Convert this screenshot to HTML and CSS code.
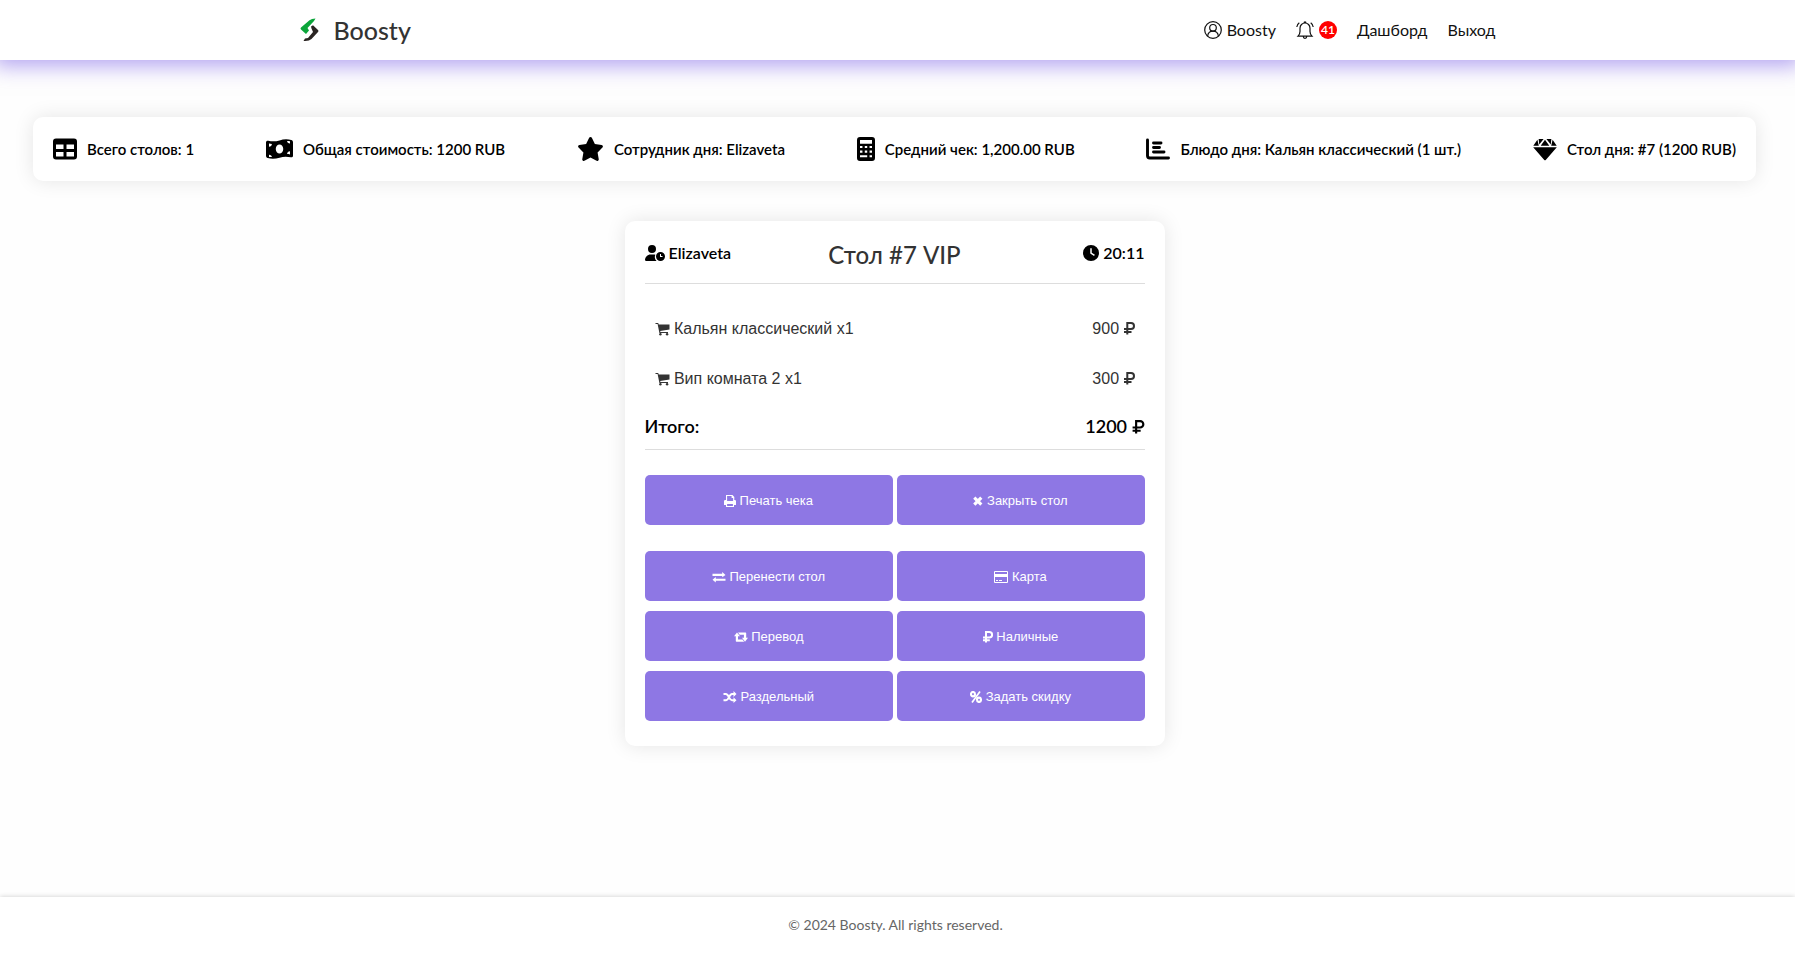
FILE: index.html
```
<!DOCTYPE html>
<html lang="ru">
<head>
<meta charset="utf-8">
<title>Boosty</title>
<link rel="stylesheet" href="styles.css">
</head>
<body>
<header class="header">
  <div class="header-inner">
    <a class="brand" href="#">
      <svg class="brand-logo" viewBox="0 0 20 26" aria-hidden="true"><path fill="#0ba53a" d="M9.500 3.200Q11.500 1.500 15.500 1.500L14 4 7.500 11 9 13.500 6 17 1 12.500Q0 11.500 1 10.500z"/><path fill="#2a2422" d="M11.500 11.500L11 9.500 13 8.300 18 13Q19 14 18 15L11.500 22Q9 24.500 3.500 24L5 21.500 8 21 13 15z"/></svg>
      <span>Boosty</span>
    </a>
    <nav class="nav">
      <a class="nav-link" href="#"><svg class="nav-icon" viewBox="0 0 18 18" fill="none" stroke="#111" stroke-width="1.200" aria-hidden="true"><circle cx="9" cy="9" r="8.300"/><circle cx="9" cy="6.800" r="3.300"/><path d="M3.600 15.200c.400-3.200 2.200-5 5.400-5s5 1.800 5.400 5"/></svg><span>Boosty</span></a>
      <a class="nav-link" href="#" aria-label="Уведомления"><svg class="nav-icon" viewBox="0 0 18 18" fill="none" stroke="#111" stroke-width="1.200" aria-hidden="true"><path d="M2 15.200h14c-1.500-1.500-2-2.700-2-4.700V7.200a5 5.200 0 0 0-10 0v3.300c0 2-.500 3.200-2 4.700zM7.300 15.500a1.700 1.800 0 0 0 3.400 0M8 2.100a1 1.200 0 0 1 2 0M3.300 1.800A6 6 0 0 0 .800 6M14.700 1.800A6 6 0 0 1 17.200 6"/></svg><span class="badge">41</span></a>
      <a class="nav-link" href="#">Дашборд</a>
      <a class="nav-link" href="#">Выход</a>
    </nav>
  </div>
</header>

<main class="main">
  <section class="stats">
    <div class="stat"><svg class="stat-icon" viewBox="0 0 512 512" aria-hidden="true"><path fill-rule="evenodd" d="M64 32h384a64 64 0 0 1 64 64v320a64 64 0 0 1-64 64H64a64 64 0 0 1-64-64V96a64 64 0 0 1 64-64zm0 128v96h160v-96zm224 0v96h160v-96zM64 320v96h160v-96zm224 0v96h160v-96z"/></svg><span>Всего столов: 1</span></div>
    <div class="stat"><svg class="stat-icon wide" viewBox="0 0 576 512" aria-hidden="true"><path fill-rule="evenodd" d="M0 112C0 86 23 73 48 79c80 20 160 17 240-7 85-25 170-30 252-6 22 6 36 25 36 47v287c0 26-23 39-48 33-80-20-160-17-240 7-85 25-170 30-252 6-22-6-36-25-36-47zM288 160c-44 0-80 43-80 96s36 96 80 96 80-43 80-96-36-96-80-96zM64 376v48c22 2 42 4 62 4 0-28-26-52-62-52zM126 148c-21-1-42-4-62-8v68c34 0 62-27 62-60zM512 304c-36 0-62 26-62 60 21 0 42 3 62 7zm0-216c-20-3-41-4-62-4 0 30 26 52 62 52z"/></svg><span>Общая стоимость: 1200 RUB</span></div>
    <div class="stat"><svg class="stat-icon wide" viewBox="0 0 576 512" aria-hidden="true"><path d="M317 18c-12-24-46-24-58 0l-64 132-144 21c-26 4-37 36-18 55l104 103-25 145c-4 26 24 46 47 34l129-69 129 69c23 12 51-8 47-34l-25-145 104-103c19-19 8-51-18-55l-144-21z"/></svg><span>Сотрудник дня: Elizaveta</span></div>
    <div class="stat"><svg class="stat-icon slim" viewBox="0 0 384 512" aria-hidden="true"><path fill-rule="evenodd" d="M64 0h256a64 64 0 0 1 64 64v384a64 64 0 0 1-64 64H64a64 64 0 0 1-64-64V64A64 64 0 0 1 64 0zm0 64v80h256V64zM64 192v44h52v-44zm102 0v44h52v-44zm102 0v44h52v-44zM64 288v48h52v-48zm102 0v48h52v-48zm102 0v48h52v-48zM64 388v44h154v-44zm204 0v44h52v-44z"/></svg><span>Средний чек: 1,200.00 RUB</span></div>
    <div class="stat"><svg class="stat-icon" viewBox="0 0 512 512" fill="none" stroke="#000" stroke-width="62" stroke-linecap="round" stroke-linejoin="round" aria-hidden="true"><path d="M32 64v336q0 48 48 48h400M160 128h160M160 224h96M160 320h224M160 224h128"/></svg><span>Блюдо дня: Кальян классический (1 шт.)</span></div>
    <div class="stat"><svg class="stat-icon" viewBox="0 0 512 512" aria-hidden="true"><path d="M120 40h106l-92 122zM286 40h106l-14 122zM256 56l92 132H164zM94 58l30 130H6zM418 58l88 130H388zM4 220h504L272 488q-16 16-32 0z"/></svg><span>Стол дня: #7 (1200 RUB)</span></div>
  </section>

  <article class="card">
    <header class="card-head">
      <span class="card-meta"><svg class="meta-icon wide" viewBox="0 0 640 512" aria-hidden="true"><path fill-rule="evenodd" d="M224 0a128 128 0 1 1 0 256 128 128 0 0 1 0-256zM178 304h92c25 0 45 4 62 10a176 176 0 0 0 38 198H30c-17 0-30-13-30-30 0-98 80-178 178-178zM496 224a144 144 0 1 1 0 288 144 144 0 0 1 0-288zm-16 64v96h80v-32h-48v-64z"/></svg> Elizaveta</span>
      <h1 class="card-title">Стол #7 VIP</h1>
      <span class="card-meta end"><svg class="meta-icon" viewBox="0 0 512 512" aria-hidden="true"><path fill-rule="evenodd" d="M256 0a256 256 0 1 1 0 512 256 256 0 0 1 0-512zm-24 100v170l120 80 28-40-100-66V100z"/></svg> 20:11</span>
    </header>
    <ul class="items">
      <li class="item"><span><svg class="item-icon" viewBox="0 0 14 14" aria-hidden="true"><path d="M0 1h2.700l.500 1.500H14v5L4.700 8.900l.200 1H12.500v1H3.900L2.100 2H0z"/><circle cx="4.900" cy="12.200" r="1.200"/><circle cx="11.600" cy="12.200" r="1.200"/></svg> Кальян классический x1</span><span>900 <svg class="ruble" viewBox="0 0 11 13" fill="none" stroke="currentColor" stroke-width="2" role="img" aria-label="руб."><path d="M3.300 12.500V1H7a2.900 2.900 0 0 1 0 6H0M0 10h7.500"/></svg></span></li>
      <li class="item"><span><svg class="item-icon" viewBox="0 0 14 14" aria-hidden="true"><path d="M0 1h2.700l.500 1.500H14v5L4.700 8.900l.200 1H12.500v1H3.900L2.100 2H0z"/><circle cx="4.900" cy="12.200" r="1.200"/><circle cx="11.600" cy="12.200" r="1.200"/></svg> Вип комната 2 x1</span><span>300 <svg class="ruble" viewBox="0 0 11 13" fill="none" stroke="currentColor" stroke-width="2" role="img" aria-label="руб."><path d="M3.300 12.500V1H7a2.900 2.900 0 0 1 0 6H0M0 10h7.500"/></svg></span></li>
    </ul>
    <div class="total"><span>Итого:</span><span>1200 <svg class="ruble big" viewBox="0 0 11 13" fill="none" stroke="currentColor" stroke-width="2" role="img" aria-label="руб."><path d="M3.300 12.500V1H7a2.900 2.900 0 0 1 0 6H0M0 10h7.500"/></svg></span></div>
    <div class="action-groups">
      <div class="actions">
        <button class="btn" type="button"><svg class="btn-icon" viewBox="0 0 12 12" aria-hidden="true"><path fill-rule="evenodd" d="M2 0h6.500L10.300 2v3h.500Q12 5 12 6.200V10h-2v2H2v-2H0V6.200Q0 5 1.200 5H2zm1.100 1.100V6h6V3H7.600V1.100zM3.100 9v2h5.800V9z"/></svg> Печать чека</button>
        <button class="btn" type="button"><svg class="btn-icon x" viewBox="0 0 10 12" fill="none" stroke="currentColor" stroke-width="3.200" aria-hidden="true"><path d="M1.300 2.600l7 7M8.300 2.600l-7 7"/></svg> Закрыть стол</button>
      </div>
      <div class="actions">
        <button class="btn" type="button"><svg class="btn-icon wide" viewBox="0 0 13 12" aria-hidden="true"><path d="M0 2.800h9.700V1L13 4 9.700 6.200V5H0zM13 7.800v2H3.300v1.700L0 8.800l3.300-2.700v1.700z"/></svg> Перенести стол</button>
        <button class="btn" type="button"><svg class="btn-icon card-icon" viewBox="0 0 14 12" aria-hidden="true"><path fill-rule="evenodd" d="M1 0h12q1 0 1 1v10q0 1-1 1H1q-1 0-1-1V1q0-1 1-1zm0 1v2h12V1zm0 5v5h12V6zm1 3h2v1H2zm3 0h3v1H5z"/></svg> Карта</button>
        <button class="btn" type="button"><svg class="btn-icon wide" viewBox="0 0 14 12" aria-hidden="true"><path d="M3 1.500L6 5.200H4V8.500h4.500l1.700 2.200H2.500q-.700 0-.700-.700V5.200H0zM4 1.500h7.500q.700 0 .700.700v4.600H14L11 10.700 8 6.800h1.900V3.700H5.700z"/></svg> Перевод</button>
        <button class="btn" type="button"><svg class="btn-icon x" viewBox="0 0 11 13" fill="none" stroke="currentColor" stroke-width="2.200" aria-hidden="true"><path d="M3.300 12.500V1H7a2.900 2.900 0 0 1 0 6H0M0 10h7.500"/></svg> Наличные</button>
        <button class="btn" type="button"><svg class="btn-icon wide" viewBox="0 0 13 12" aria-hidden="true"><path fill="none" stroke="currentColor" stroke-width="1.900" d="M0 3h2.300C5.500 3 5.500 9.300 8.500 9.300H11M0 9.300h2.300C5.500 9.300 5.500 3 8.500 3H11"/><path d="M10 0l3 3-3 3zM10 6.300l3 3-3 2.700z"/></svg> Раздельный</button>
        <button class="btn" type="button"><svg class="btn-icon" viewBox="0 0 12 12" fill="none" stroke="currentColor" aria-hidden="true"><ellipse cx="3" cy="3.200" rx="2" ry="2.200" stroke-width="2.100"/><ellipse cx="9" cy="8.800" rx="2" ry="2.200" stroke-width="2.100"/><path stroke-width="1.700" d="M10 .500L2 11.500"/></svg> Задать скидку</button>
      </div>
    </div>
  </article>
</main>

<footer class="footer">© 2024 Boosty. All rights reserved.</footer>
</body>
</html>
```
FILE: styles.css
```
* { box-sizing: border-box; }

body {
  margin: 0;
  min-height: 100vh;
  display: flex;
  flex-direction: column;
  background: #fefefe;
  color: #000;
  font-family: Lato, "Open Sans", sans-serif;
  font-size: 16px;
}

a { color: inherit; text-decoration: none; }
svg { fill: currentColor; flex: none; }
svg[fill="none"] { fill: none; }

.header {
  background: #fff;
  box-shadow: 0 0 20px 6px rgba(106, 76, 230, .5);
}

.header-inner {
  display: flex;
  align-items: center;
  justify-content: space-between;
  max-width: 1200px;
  height: 60px;
  margin: 0 auto;
  padding: 0 2px;
}

.brand {
  display: flex;
  align-items: center;
  gap: 14px;
  color: #333;
  font-size: 25px;
  font-weight: 500;
  line-height: 28px;
}

.brand-logo { width: 20px; height: 26px; }

.nav { display: flex; align-items: center; gap: 20px; color: #111; line-height: 18px; }
.nav-link { display: flex; align-items: center; gap: 5px; }
.nav-icon { width: 18px; height: 18px; }

.badge {
  width: 18px;
  height: 18px;
  border-radius: 50%;
  background: #f00;
  color: #fff;
  font-size: 12px;
  font-weight: 600;
  line-height: 18px;
  text-align: center;
}

.main { flex: 1; padding: 57px 39px 40px 33px; }

.stats {
  display: flex;
  justify-content: space-between;
  align-items: center;
  min-height: 64px;
  padding: 0 20px;
  border-radius: 10px;
  background: #fff;
  box-shadow: 0 0 20px rgba(0, 0, 0, .1);
  font-size: 15px;
  font-weight: 600;
}

.stat { display: flex; align-items: center; gap: 10px; }
.stat-icon { width: 24px; height: 24px; }
.stat-icon.wide { width: 27px; }
.stat-icon.slim { width: 18px; }

.card {
  width: 100%;
  max-width: 540px;
  margin: 40px auto 0;
  padding: 20px 20px 25px;
  border-radius: 10px;
  background: #fff;
  box-shadow: 0 0 20px rgba(0, 0, 0, .1);
}

.card-head {
  display: grid;
  grid-template-columns: 1fr auto 1fr;
  height: 43px;
  border-bottom: 1px solid #ddd;
}

.card-meta { font-weight: 600; line-height: 24px; }
.card-meta.end { text-align: right; }
.meta-icon { width: 16px; height: 16px; vertical-align: -2px; }
.meta-icon.wide { width: 20px; }

.card-title {
  margin: 0;
  color: #333;
  font-size: 24px;
  font-weight: 500;
  line-height: 27px;
}

.items {
  margin: 20px 0 0;
  padding: 0;
  list-style: none;
  color: #333;
  font-family: "Liberation Sans", Arial, sans-serif;
  font-size: 16px;
}

.item {
  display: flex;
  justify-content: space-between;
  align-items: center;
  height: 50px;
  padding: 0 10px;
}

.item-icon { width: 15px; height: 14px; vertical-align: -2px; }
.ruble { width: 11px; height: 13px; vertical-align: -1px; }
.ruble.big { width: 13px; height: 14px; }

.total {
  display: flex;
  justify-content: space-between;
  height: 46px;
  border-bottom: 1px solid #ddd;
  font-size: 18px;
  font-weight: 600;
  line-height: 44px;
}

.action-groups {
  display: grid;
  gap: 26px;
  margin-top: 25px;
}

.actions {
  display: grid;
  grid-template-columns: 1fr 1fr;
  gap: 10px 4px;
}

.btn {
  height: 50px;
  border: 0;
  border-radius: 5px;
  background: #8e77e4;
  color: #fff;
  font-family: "Liberation Sans", Arial, sans-serif;
  font-size: 13px;
}

.btn-icon { width: 12px; height: 12px; vertical-align: -2px; }
.btn-icon.x { width: 10px; }
.btn-icon.wide { width: 14px; }
.btn-icon.card-icon { width: 14px; }

.footer {
  padding: 20px 20px 20px 16px;
  background: #fff;
  box-shadow: 0 0 5px rgba(0, 0, 0, .2);
  color: #666;
  font-size: 14px;
  line-height: 16px;
  text-align: center;
}
```
